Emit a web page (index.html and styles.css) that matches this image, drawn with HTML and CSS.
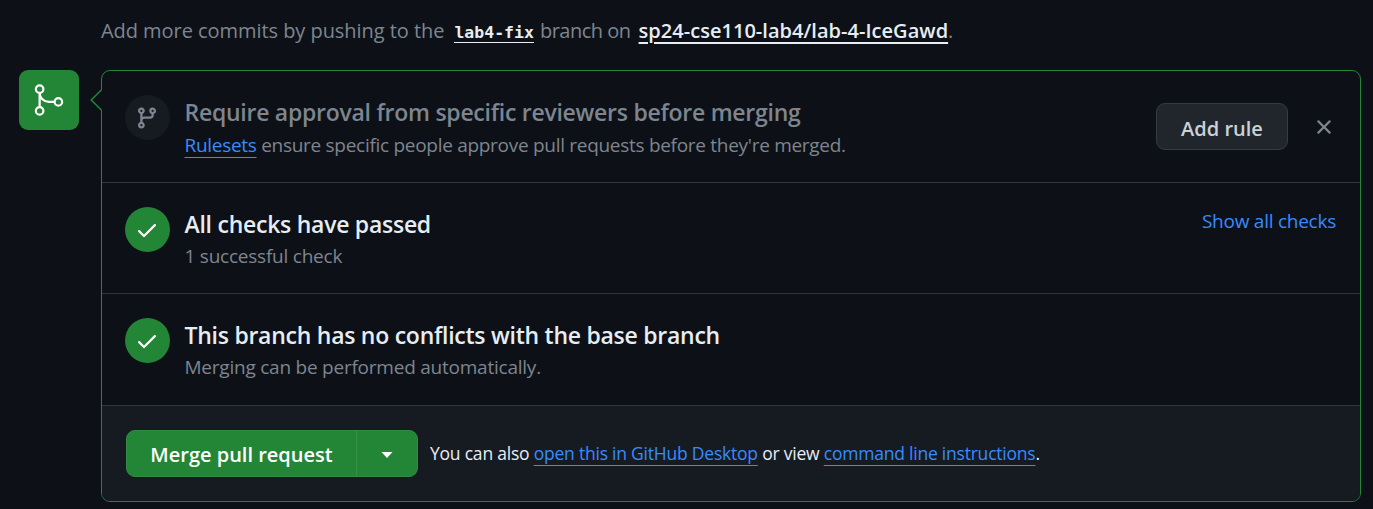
FILE: index.html
```html
<!DOCTYPE html>
<html lang="en">
<head>
<meta charset="utf-8">
<title>Merge pull request</title>
<link rel="stylesheet" href="styles.css">
</head>
<body>
<p class="push-hint"><span class="hint-lead">Add more commits by pushing to the</span><a class="branch-name">lab4-fix</a><span class="hint-mid">branch on</span><a class="repo-name">sp24-cse110-lab4/lab-4-IceGawd</a>.</p>
<main class="merge">
  <div class="merge-badge">
    <svg width="36" height="36" viewBox="0 0 24 24" fill="none" stroke="#fff" stroke-width="1.5"><circle cx="5.75" cy="4.75" r="2.5"/><circle cx="5.75" cy="19.25" r="2.5"/><circle cx="18.25" cy="13.25" r="2.5"/><path d="M5.75 7.25v9.5M5.75 7.25c0 3.4 2.8 6 6.2 6h3.8"/></svg>
  </div>
  <section class="panel">
    <svg class="panel-caret" width="12" height="22" viewBox="0 0 12 22"><path d="M12 0.5 1.2 11 12 21.5z" fill="#0d1117"/><path d="M11.5 .7 1.2 11l10.3 10.3" fill="none" stroke="#238636" stroke-width="1.5"/></svg>
    <div class="row row-rule">
      <div class="status status-muted">
        <svg width="24" height="24" viewBox="0 0 16 16" fill="#7d8590"><path d="M9.5 3.25a2.25 2.25 0 1 1 3 2.122V6A2.5 2.5 0 0 1 10 8.5H6a1 1 0 0 0-1 1v1.128a2.251 2.251 0 1 1-1.5 0V5.372a2.25 2.25 0 1 1 1.5 0v1.836A2.493 2.493 0 0 1 6 7h4a1 1 0 0 0 1-1v-.628A2.25 2.25 0 0 1 9.5 3.25Zm-6 0a.75.75 0 1 0 1.5 0 .75.75 0 0 0-1.5 0Zm8.25-.75a.75.75 0 1 0 0 1.5.75.75 0 0 0 0-1.5ZM4.25 12a.75.75 0 1 0 0 1.5.75.75 0 0 0 0-1.5Z"/></svg>
      </div>
      <div class="copy">
        <h3 class="title title-muted">Require approval from specific reviewers before merging</h3>
        <p class="detail detail-rule"><a class="link">Rulesets</a> <span>ensure specific people approve pull requests before they're merged.</span></p>
      </div>
      <button class="btn-rule">Add rule</button>
      <svg class="close" width="24" height="24" viewBox="0 0 16 16" fill="#7d8590"><path d="M3.72 3.72a.75.75 0 0 1 1.06 0L8 6.94l3.22-3.22a.75.75 0 1 1 1.06 1.06L9.06 8l3.22 3.22a.75.75 0 1 1-1.06 1.06L8 9.06l-3.22 3.22a.75.75 0 0 1-1.06-1.06L6.94 8 3.72 4.78a.75.75 0 0 1 0-1.06Z"/></svg>
    </div>
    <div class="row row-checks">
      <div class="status status-ok">
        <svg width="24" height="24" viewBox="0 0 16 16" fill="#fff"><path d="M13.78 4.22a.75.75 0 0 1 0 1.06l-7.25 7.25a.75.75 0 0 1-1.06 0L2.22 9.28a.75.75 0 0 1 1.06-1.06L6 10.94l6.72-6.72a.75.75 0 0 1 1.06 0Z"/></svg>
      </div>
      <div class="copy">
        <h3 class="title">All checks have passed</h3>
        <p class="detail">1 successful check</p>
      </div>
      <a class="show-all">Show all checks</a>
    </div>
    <div class="row row-conflicts">
      <div class="status status-ok">
        <svg width="24" height="24" viewBox="0 0 16 16" fill="#fff"><path d="M13.78 4.22a.75.75 0 0 1 0 1.06l-7.25 7.25a.75.75 0 0 1-1.06 0L2.22 9.28a.75.75 0 0 1 1.06-1.06L6 10.94l6.72-6.72a.75.75 0 0 1 1.06 0Z"/></svg>
      </div>
      <div class="copy">
        <h3 class="title">This branch has no conflicts with the base branch</h3>
        <p class="detail">Merging can be performed automatically.</p>
      </div>
    </div>
    <footer class="actions">
      <div class="btn-group">
        <button class="btn-merge">Merge pull request</button>
        <button class="btn-more" aria-label="Select merge method"><svg width="12" height="6" viewBox="0 0 12 6"><path d="M.5 0h11L6 6z" fill="#fff"/></svg></button>
      </div>
      <p class="alt">You can also <a class="link">open this in GitHub Desktop</a> or view <a class="link">command line instructions</a>.</p>
    </footer>
  </section>
</main>
</body>
</html>
```
FILE: styles.css
```css
* { box-sizing: border-box; }
body {
  margin: 0;
  height: 509px;
  overflow: hidden;
  background: #0d1117;
  color: #e6edf3;
  font-family: "Open Sans", "Noto Sans", sans-serif;
}
p, h3 { margin: 0; white-space: nowrap; }
button { font-family: inherit; padding: 0; margin: 0; color: inherit; }
.push-hint {
  height: 70px;
  padding: 15px 0 0 101px;
  font-size: 20px;
  line-height: 32px;
  color: #7d8590;
}
.hint-lead { letter-spacing: -0.05px; }
.branch-name {
  margin: 0 6px 0 10px;
  font: bold 16.5px/20px "DejaVu Sans Mono", monospace;
  color: #e6edf3;
  border-bottom: 1px solid #e6edf3;
}
.hint-mid { letter-spacing: -0.5px; }
.repo-name {
  margin-left: 8px;
  color: #e6edf3;
  font-weight: 600;
  letter-spacing: 0.03px;
  text-decoration: underline 2px;
  text-underline-offset: 4px;
}
.merge { display: flex; gap: 22px; padding-left: 19px; }
.merge-badge {
  display: flex;
  align-items: center;
  justify-content: center;
  width: 60px;
  height: 60px;
  border-radius: 9px;
  background: #238636;
}
.panel {
  position: relative;
  width: 1260px;
  height: 432px;
  border: 1px solid #238636;
  border-radius: 9px;
}
.panel-caret { position: absolute; left: -12px; top: 18px; }
.row { display: flex; padding: 24px 24px 0 23px; border-bottom: 1px solid #30363d; }
.row-rule { height: 112px; }
.row-checks { height: 111px; }
.row-conflicts { height: 112px; }
.status {
  display: flex;
  align-items: center;
  justify-content: center;
  flex: none;
  width: 45px;
  height: 45px;
  padding-right: 2px;
  border-radius: 50%;
}
.status-muted { background: #161b22; }
.status-ok { background: #238636; }
.copy { margin-left: 14.5px; flex: 1; }
.title { font-size: 23px; line-height: 34px; font-weight: 600; letter-spacing: -0.26px; }
.title-muted { color: #7d8590; }
.detail { padding-top: 1px; font-size: 19px; line-height: 28px; letter-spacing: -0.23px; color: #7d8590; }
.detail-rule { padding-top: 2px; letter-spacing: -0.29px; }
.link {
  color: #388bfd;
  text-decoration: underline 1px;
  text-underline-offset: 5px;
}
.btn-rule {
  width: 132px;
  height: 47px;
  margin-top: 8px;
  padding-top: 3px;
  border: 1px solid #363b42;
  border-radius: 9px;
  background: #21262d;
  color: #c9d1d9;
  font-size: 20px;
  font-weight: 600;
}
.close { margin: 20px 0 0 24px; }
.show-all { color: #388bfd; font-size: 19px; line-height: 28px; letter-spacing: -0.25px; }
.actions {
  display: flex;
  align-items: center;
  gap: 12px;
  height: 95px;
  padding-left: 24px;
  background: #161b22;
  border-radius: 0 0 8px 8px;
}
.btn-group {
  display: flex;
  width: 292px;
  height: 47px;
  border: 1px solid #2f8c42;
  border-radius: 9px;
  background: #238636;
  overflow: hidden;
}
.btn-merge {
  width: 230px;
  padding-top: 2px;
  border: 0;
  border-right: 1px solid #399149;
  background: none;
  color: #fff;
  font-size: 20px;
  font-weight: 600;
}
.btn-more {
  display: flex;
  flex: 1;
  align-items: center;
  justify-content: center;
  padding-top: 3px;
  border: 0;
  background: none;
}
.alt { padding-bottom: 2px; font-size: 17.5px; line-height: 28px; letter-spacing: -0.22px; }
```
